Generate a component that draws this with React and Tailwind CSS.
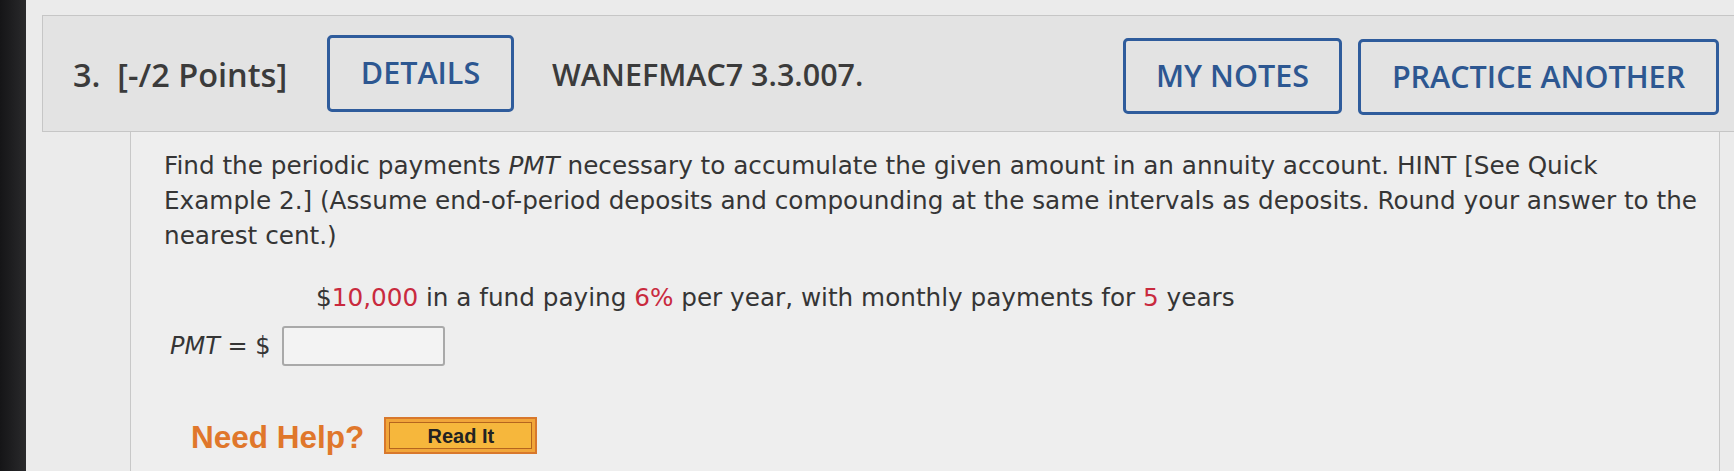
export default function App() {
  return (
    <div className="w-[1734px] h-[471px] flex overflow-hidden bg-[#ebebeb]">
      <div className="w-[26px] shrink-0 bg-gradient-to-r from-[#151517] to-[#2a2a2c]" />
      <div className="flex-1 flex flex-col pt-[15px] pl-[16px]">
        {/* header bar */}
        <div
          className="h-[117px] -mr-[20px] flex items-center border border-[#c6c6c6] bg-[#e3e3e3] text-[#3b3b3b]"
          style={{ fontFamily: '"Open Sans", "Liberation Sans", sans-serif' }}
        >
          <div className="pl-[30px] w-[284px] mt-[3px] text-[32.5px] font-semibold">3.&nbsp; [-/2 Points]</div>
          <button className="-mt-[1px] w-[187px] h-[77px] border-[3px] border-[#2f5c9c] rounded-[5px] text-[30.5px] font-semibold text-[#2d5791]">
            DETAILS
          </button>
          <div className="ml-[38px] mt-[3px] text-[30.5px] font-semibold">WANEFMAC7 3.3.007.</div>
          <button className="ml-auto mt-[4px] w-[219px] h-[76px] border-[3px] border-[#2f5c9c] rounded-[5px] text-[30.5px] font-semibold text-[#2d5791]">
            MY NOTES
          </button>
          <button className="ml-[16px] mr-[34px] mt-[6px] w-[361px] h-[76px] border-[3px] border-[#2f5c9c] rounded-[5px] text-[30.5px] font-semibold text-[#2d5791]">
            PRACTICE ANOTHER
          </button>
        </div>

        {/* question body */}
        <div className="ml-[88px] mr-[14px] flex-1 border-l border-r border-[#c8c8c8] bg-[#eeeeee] pl-[33px] pt-[16px]">
          <p
            className="text-[24.7px] leading-[35px] text-[#353535]"
            style={{ fontFamily: '"DejaVu Sans", Verdana, sans-serif' }}
          >
            Find the periodic payments <i>PMT</i> necessary to accumulate the given amount in an annuity account. HINT [See Quick
            <br />
            Example 2.] (Assume end-of-period deposits and compounding at the same intervals as deposits. Round your answer to the
            <br />
            nearest cent.)
          </p>
          <p
            className="mt-[27px] ml-[152px] text-[24.7px] leading-[35px] text-[#353535]"
            style={{ fontFamily: '"DejaVu Sans", Verdana, sans-serif' }}
          >
            $<span className="text-[#c92a3e]">10,000</span> in a fund paying <span className="text-[#c92a3e]">6%</span> per year, with monthly payments for{" "}
            <span className="text-[#c92a3e]">5</span> years
          </p>
          <div
            className="mt-[11px] ml-[6px] flex items-center text-[24px] text-[#353535]"
            style={{ fontFamily: '"DejaVu Sans", Verdana, sans-serif' }}
          >
            <span>
              <i>PMT</i> = $
            </span>
            <div className="ml-[12px] w-[163px] h-[40px] border-2 border-[#a9a9a9] rounded-[3px] bg-[#f3f3f3]" />
          </div>
          <div className="mt-[48px] ml-[27px] flex items-center" style={{ fontFamily: '"Liberation Sans", Arial, sans-serif' }}>
            <span className="text-[31.5px] font-bold text-[#e0772b]">Need Help?</span>
            <div className="ml-[20px] -mt-[4px] w-[153px] h-[37px] border-2 border-[#d8782c] bg-[#f1a63a] p-[3px]">
              <div className="h-full border border-[#b5651e] bg-[#f6b73c] flex items-center justify-center text-[20px] font-bold text-[#222]">
                Read It
              </div>
            </div>
          </div>
        </div>
      </div>
    </div>
  );
}
